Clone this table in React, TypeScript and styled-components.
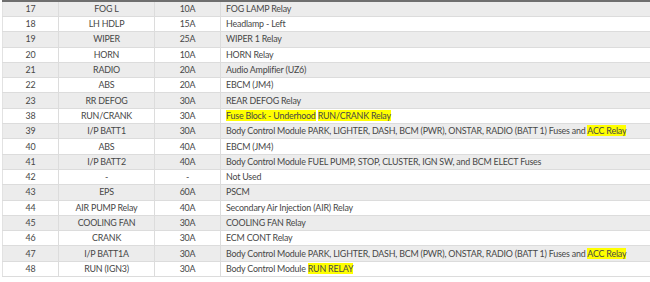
import React from 'react';
import styled, { createGlobalStyle } from 'styled-components';

const GlobalStyle = createGlobalStyle`
  html, body {
    margin: 0;
    padding: 0;
    background: #ffffff;
    overflow: hidden;
  }
  body {
    font-family: Lato, "Open Sans", "Liberation Sans", sans-serif;
  }
`;

interface Part {
  text: string;
  mark?: boolean;
}

interface Fuse {
  no: string;
  name: string;
  amps: string;
  usage: Part[];
}

const fuses: Fuse[] = [
  { no: '17', name: 'FOG L', amps: '10A', usage: [{ text: 'FOG LAMP Relay' }] },
  { no: '18', name: 'LH HDLP', amps: '15A', usage: [{ text: 'Headlamp - Left' }] },
  { no: '19', name: 'WIPER', amps: '25A', usage: [{ text: 'WIPER 1 Relay' }] },
  { no: '20', name: 'HORN', amps: '10A', usage: [{ text: 'HORN Relay' }] },
  { no: '21', name: 'RADIO', amps: '20A', usage: [{ text: 'Audio Amplifier (UZ6)' }] },
  { no: '22', name: 'ABS', amps: '20A', usage: [{ text: 'EBCM (JM4)' }] },
  { no: '23', name: 'RR DEFOG', amps: '30A', usage: [{ text: 'REAR DEFOG Relay' }] },
  {
    no: '38',
    name: 'RUN/CRANK',
    amps: '30A',
    usage: [
      { text: 'Fuse Block - Underhood', mark: true },
      { text: ' ' },
      { text: 'RUN/CRANK Relay', mark: true },
    ],
  },
  {
    no: '39',
    name: 'I/P BATT1',
    amps: '30A',
    usage: [
      { text: 'Body Control Module PARK, LIGHTER, DASH, BCM (PWR), ONSTAR, RADIO (BATT 1) Fuses and ' },
      { text: 'ACC Relay', mark: true },
    ],
  },
  { no: '40', name: 'ABS', amps: '40A', usage: [{ text: 'EBCM (JM4)' }] },
  {
    no: '41',
    name: 'I/P BATT2',
    amps: '40A',
    usage: [{ text: 'Body Control Module FUEL PUMP, STOP, CLUSTER, IGN SW, and BCM ELECT Fuses' }],
  },
  { no: '42', name: '-', amps: '-', usage: [{ text: 'Not Used' }] },
  { no: '43', name: 'EPS', amps: '60A', usage: [{ text: 'PSCM' }] },
  { no: '44', name: 'AIR PUMP Relay', amps: '40A', usage: [{ text: 'Secondary Air Injection (AIR) Relay' }] },
  { no: '45', name: 'COOLING FAN', amps: '30A', usage: [{ text: 'COOLING FAN Relay' }] },
  { no: '46', name: 'CRANK', amps: '30A', usage: [{ text: 'ECM CONT Relay' }] },
  {
    no: '47',
    name: 'I/P BATT1A',
    amps: '30A',
    usage: [
      { text: 'Body Control Module PARK, LIGHTER, DASH, BCM (PWR), ONSTAR, RADIO (BATT 1) Fuses and ' },
      { text: 'ACC Relay', mark: true },
    ],
  },
  {
    no: '48',
    name: 'RUN (IGN3)',
    amps: '30A',
    usage: [{ text: 'Body Control Module ' }, { text: 'RUN RELAY', mark: true }],
  },
];

const Wrapper = styled.div`
  padding-left: 2px;
  width: 660px;
`;

const Table = styled.table`
  width: 100%;
  border-collapse: collapse;
  border-top: 2px solid #6f6f6f;
  border-left: 1px solid #e2e2e2;
  table-layout: fixed;
  font-size: 8.9px;
  letter-spacing: -0.2px;
  color: #474747;
`;

const Row = styled.tr<{ $shaded: boolean }>`
  height: 15.3px;
  background: ${(p) => (p.$shaded ? '#ececec' : '#ffffff')};
`;

const Cell = styled.td<{ $align?: 'left' | 'center'; $w?: number }>`
  ${(p) => (p.$w ? `width: ${p.$w}px;` : '')}
  padding: 0 5px;
  height: 14.3px;
  line-height: 14px;
  border-bottom: 1px solid #dcdcdc;
  border-right: 1px solid #dcdcdc;
  text-align: ${(p) => p.$align ?? 'center'};
  white-space: nowrap;
  overflow: hidden;
  box-sizing: border-box;
`;

const Mark = styled.span`
  background: #ffff00;
`;

export default function App() {
  return (
    <Wrapper>
      <GlobalStyle />
      <Table>
        <tbody>
          {fuses.map((f, i) => (
            <Row key={f.no} $shaded={i % 2 === 0}>
              <Cell $w={56}>{f.no}</Cell>
              <Cell $w={96}>{f.name}</Cell>
              <Cell $w={66}>{f.amps}</Cell>
              <Cell $align="left">
                {f.usage.map((u, k) => (u.mark ? <Mark key={k}>{u.text}</Mark> : <span key={k}>{u.text}</span>))}
              </Cell>
            </Row>
          ))}
        </tbody>
      </Table>
    </Wrapper>
  );
}
